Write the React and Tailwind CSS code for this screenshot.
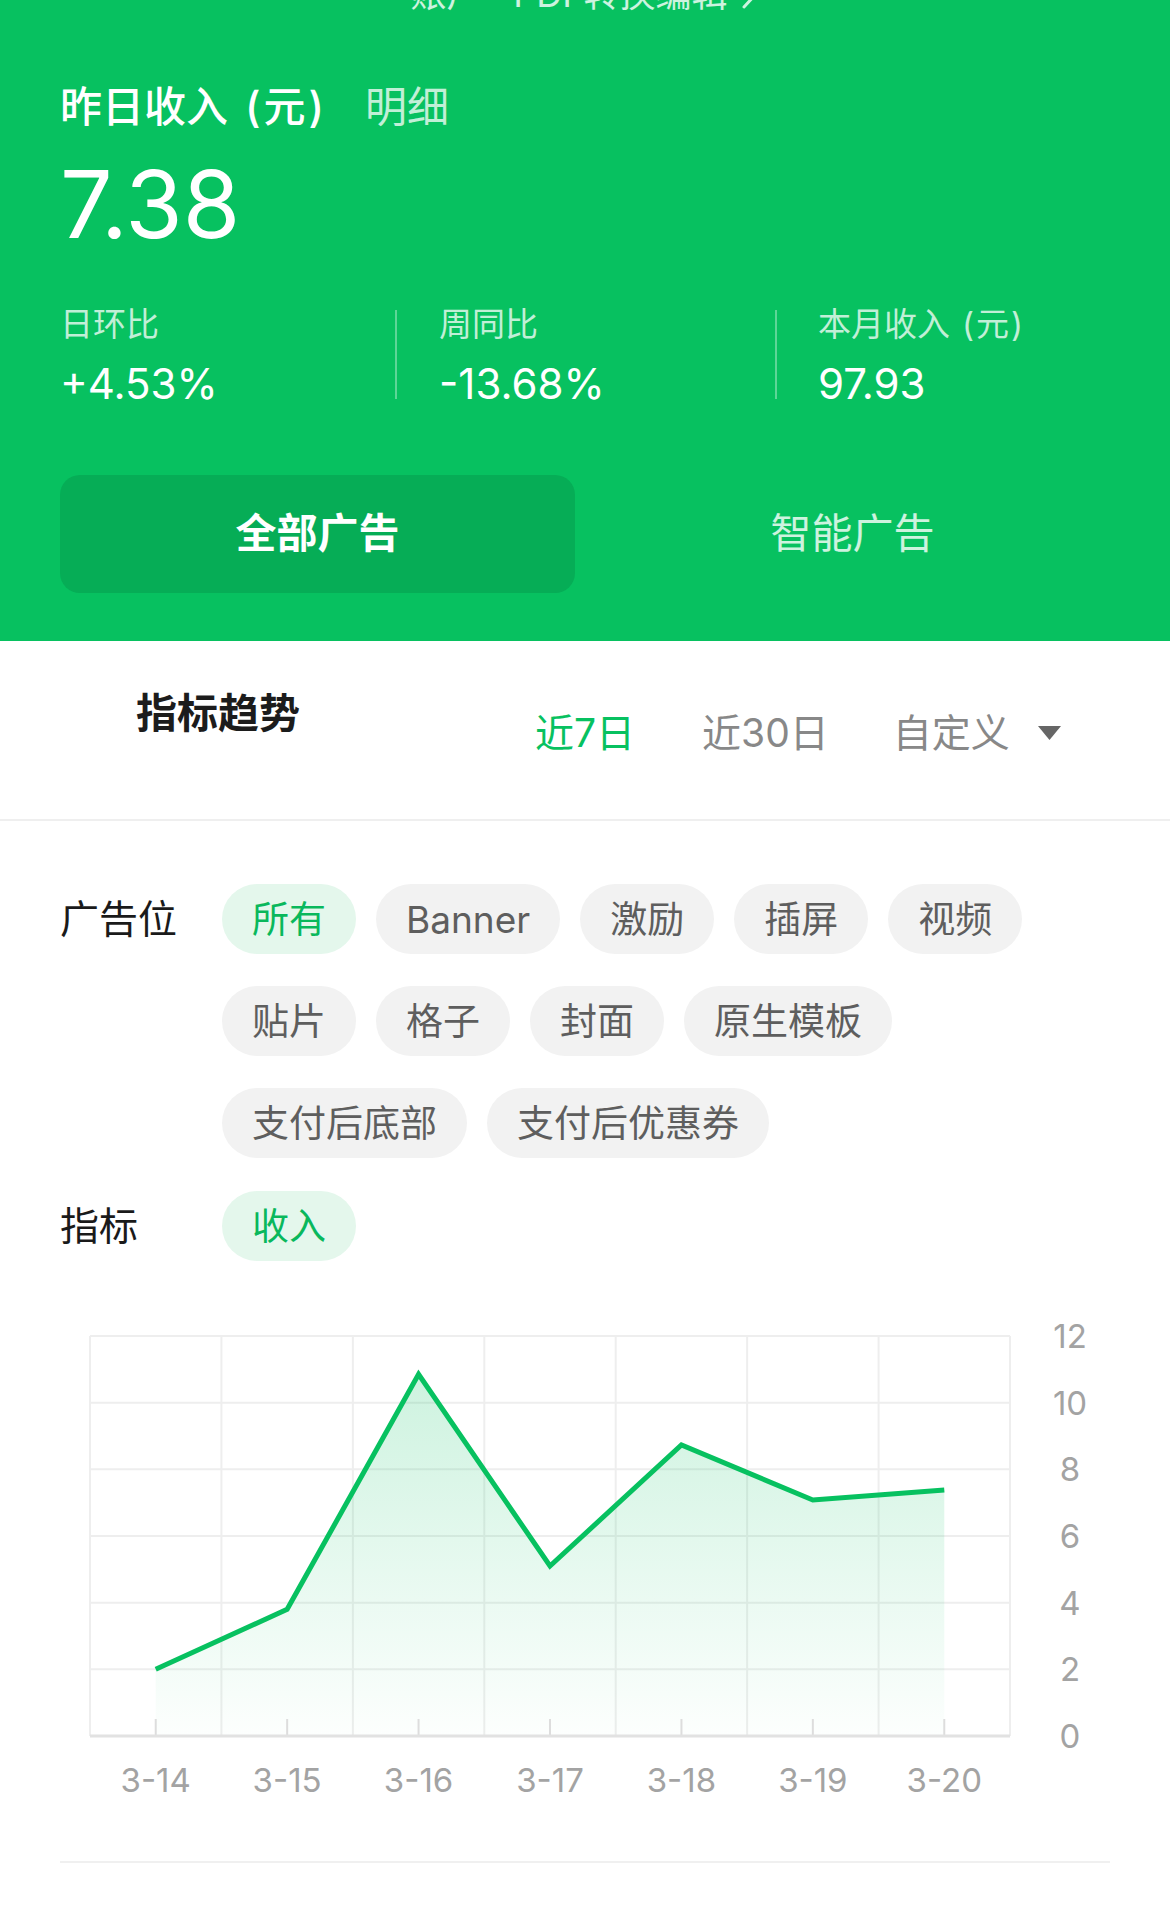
import React from "react";

const values = [2.0, 3.8, 10.85, 5.1, 8.73, 7.08, 7.38];
const dates = ["3-14", "3-15", "3-16", "3-17", "3-18", "3-19", "3-20"];
const FONT = "Inter, 'Noto Sans CJK SC', sans-serif";

function Chart() {
  const x0 = 90;
  const x1 = 1010;
  const y0 = 35;
  const y1 = 435;
  const cw = (x1 - x0) / 7;
  const rh = (y1 - y0) / 6;
  const px = (i) => x0 + cw / 2 + i * cw;
  const py = (v) => y1 - (v * (y1 - y0)) / 12;
  const line = values.map((v, i) => `${px(i)},${py(v)}`).join(" ");
  const area = `${px(0)},${y1} ${line} ${px(6)},${y1}`;
  return (
    <svg width="1170" height="520" viewBox="0 0 1170 520" className="block">
      <defs>
        <linearGradient id="areaFill" x1="0" y1="0" x2="0" y2="1">
          <stop offset="0" stopColor="#07c160" stopOpacity="0.2" />
          <stop offset="1" stopColor="#07c160" stopOpacity="0.01" />
        </linearGradient>
      </defs>
      {[0, 1, 2, 3, 4, 5].map((k) => (
        <line key={"h" + k} x1={x0} x2={x1} y1={y0 + k * rh} y2={y0 + k * rh} stroke="#eeeeee" strokeWidth="2" />
      ))}
      {[0, 1, 2, 3, 4, 5, 6, 7].map((k) => (
        <line key={"v" + k} x1={x0 + k * cw} x2={x0 + k * cw} y1={y0} y2={y1} stroke="#eeeeee" strokeWidth="2" />
      ))}
      <polygon points={area} fill="url(#areaFill)" />
      <polyline points={line} fill="none" stroke="#07c160" strokeWidth="5" strokeLinejoin="miter" strokeLinecap="butt" />
      {values.map((v, i) => (
        <line key={"t" + i} x1={px(i)} x2={px(i)} y1={y1 - 17} y2={y1} stroke="#dddddd" strokeWidth="2" />
      ))}
      <line x1={x0} x2={x1} y1={y1} y2={y1} stroke="#e2e2e2" strokeWidth="3" />
      {[12, 10, 8, 6, 4, 2, 0].map((n, k) => (
        <text key={"y" + n} x="1070" y={y0 + k * rh} textAnchor="middle" dominantBaseline="central" fontSize="33" fill="#a3a3a3" fontFamily={FONT}>
          {n}
        </text>
      ))}
      {dates.map((d, i) => (
        <text key={d} x={px(i)} y="479" textAnchor="middle" dominantBaseline="central" fontSize="33" fill="#a3a3a3" fontFamily={FONT}>
          {d}
        </text>
      ))}
    </svg>
  );
}

function Stat({ label, unit, value, className }) {
  return (
    <div className={className}>
      <div className="mt-[4px] flex h-[33px] items-center whitespace-nowrap text-[33px] leading-[33px] text-white/75">
        <span>{label}</span>
        {unit ? <span className="ml-[12px] tracking-[2px]">{unit}</span> : null}
      </div>
      <div className="mt-[22px] h-[41px] whitespace-nowrap text-[42px] leading-[41px] text-white">{value}</div>
    </div>
  );
}

function Chip({ children, active }) {
  return (
    <div
      className={
        "flex h-[70px] items-center whitespace-nowrap rounded-full px-[30px] text-[37px] leading-none " +
        (active ? "bg-[#e4f7ec] text-[#09b85c]" : "bg-[#f2f2f2] text-[#5e5e5e]")
      }
    >
      {children}
    </div>
  );
}

export default function App() {
  const slots = ["所有", "Banner", "激励", "插屏", "视频", "贴片", "格子", "封面", "原生模板", "支付后底部", "支付后优惠券"];
  return (
    <div className="min-h-[1925px] w-[1170px] overflow-hidden bg-white font-[Inter,'Noto_Sans_CJK_SC',sans-serif]">
      {/* Header */}
      <div className="flex flex-col bg-[#07c160] px-[60px] pb-[48px]">
        <div className="-mt-[24px] flex h-[36px] items-center justify-center gap-[14px] text-[36px] leading-[36px] text-white/80">
          <span>账户 · PDF转换编辑</span>
          <svg width="18" height="32" viewBox="0 0 18 32" fill="none">
            <path d="M3 3 L15 16 L3 29" stroke="rgba(255,255,255,0.8)" strokeWidth="3" strokeLinecap="round" strokeLinejoin="round" />
          </svg>
        </div>
        <div className="mt-[74px] flex h-[42px] items-center text-[42px] leading-[42px]">
          <span className="font-medium text-white">昨日收入</span>
          <span className="ml-[17px] font-medium tracking-[3px] text-white">(元)</span>
          <span className="ml-[38px] text-white/75">明细</span>
        </div>
        <div className="mt-[30px] h-[92px] text-[93px] leading-[92px] text-white">7.38</div>
        <div className="mt-[54px] flex items-center">
          <Stat className="w-[335px]" label="日环比" value="+4.53%" />
          <div className="h-[89px] w-[2px] bg-white/35" />
          <Stat className="w-[378px] pl-[42px]" label="周同比" value="-13.68%" />
          <div className="h-[89px] w-[2px] bg-white/35" />
          <Stat className="flex-1 pl-[41px]" label="本月收入" unit="(元)" value="97.93" />
        </div>
        <div className="mt-[71px] flex h-[118px] gap-[20px]">
          <div className="flex w-[515px] items-center justify-center rounded-[20px] bg-[#06ad56] text-[41px] font-semibold text-white">
            全部广告
          </div>
          <div className="flex flex-1 items-center justify-center text-[41px] text-white/80">智能广告</div>
        </div>
      </div>

      {/* Trend title */}
      <div className="flex h-[180px] border-b-2 border-[#efefef] pl-[136px]">
        <div className="mt-[51px] h-[42px] w-[399px] text-[41px] font-semibold leading-[42px] text-[#1c1c1c]">指标趋势</div>
        <div className="mt-[72px] flex h-[40px] items-center text-[39px] leading-[40px]">
          <span className="text-[#07c160]">近7日</span>
          <span className="ml-[67px] text-[#888888]">近30日</span>
          <span className="ml-[64px] text-[#888888]">自定义</span>
          <svg className="ml-[28px]" width="23" height="14" viewBox="0 0 23 14">
            <polygon points="0,0 23,0 11.5,14" fill="#666666" />
          </svg>
        </div>
      </div>

      {/* Filters */}
      <div className="px-[60px] pt-[63px]">
        <div className="flex items-start">
          <div className="flex h-[70px] w-[162px] shrink-0 items-center text-[39px] text-[#1a1a1a]">广告位</div>
          <div className="flex flex-1 flex-wrap gap-x-[20px] gap-y-[32px]">
            {slots.map((s, i) => (
              <Chip key={s} active={i === 0}>
                {s}
              </Chip>
            ))}
          </div>
        </div>
        <div className="mt-[33px] flex items-start">
          <div className="flex h-[70px] w-[162px] shrink-0 items-center text-[39px] text-[#1a1a1a]">指标</div>
          <Chip active>收入</Chip>
        </div>
      </div>

      {/* Chart */}
      <div className="mt-[40px]">
        <Chart />
      </div>

      <div className="mx-[60px] mt-[40px] h-[2px] bg-[#f0f0f0]" />
    </div>
  );
}
